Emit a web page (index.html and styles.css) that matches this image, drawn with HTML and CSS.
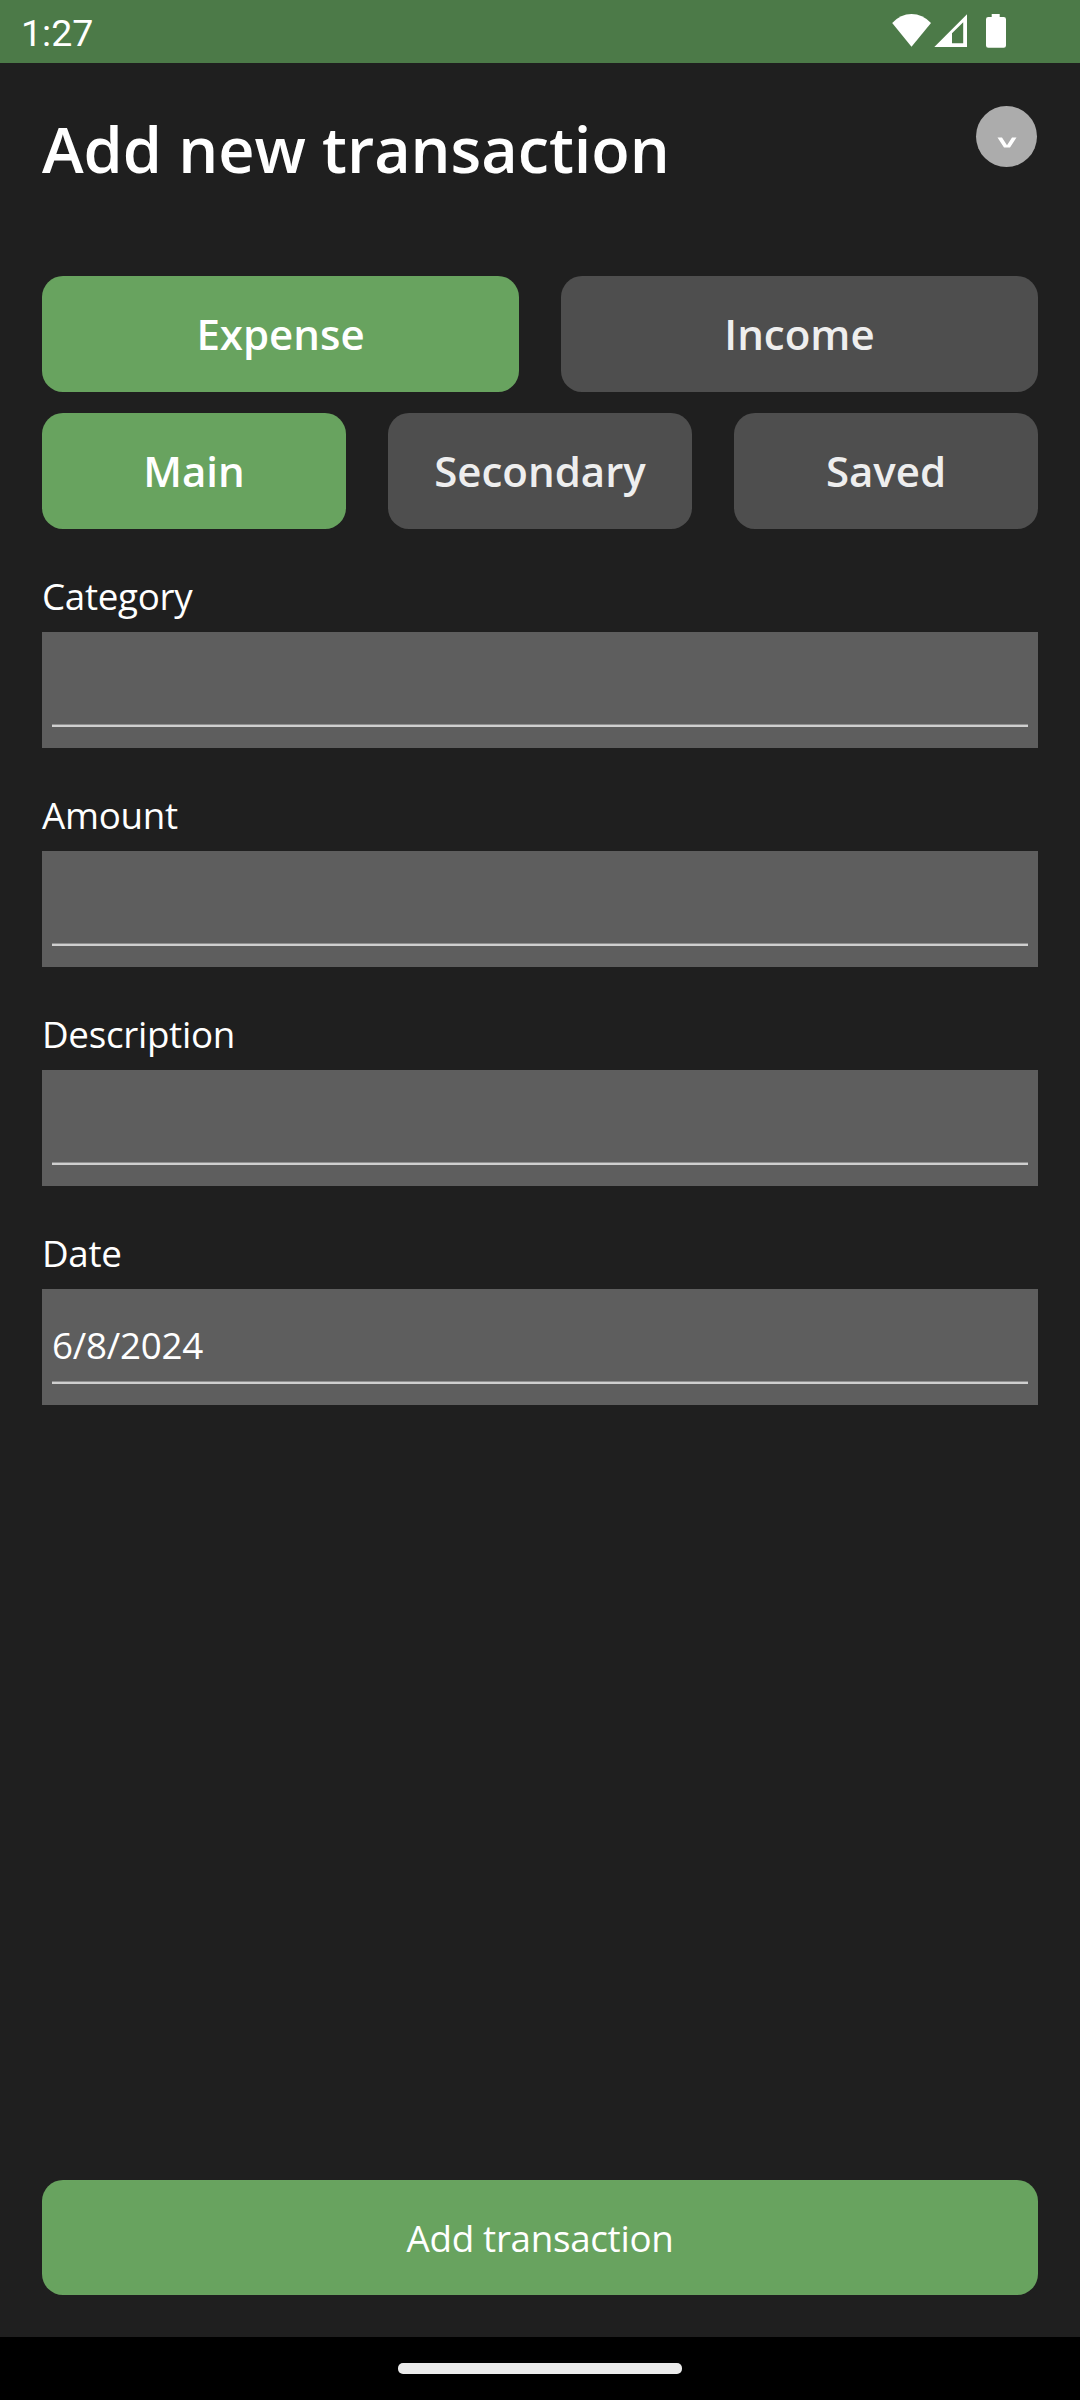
FILE: index.html
```html
<!DOCTYPE html>
<html lang="en">
<head>
<meta charset="utf-8">
<title>Add new transaction</title>
<link rel="stylesheet" href="styles.css">
</head>
<body>
<header class="status">
  <span class="clock">1:27</span>
  <svg class="status-icons" width="130" height="40" viewBox="0 0 130 40" fill="#fff">
    <path d="M0.2 11Q8.500 2 19.500 2T39 11L19.500 34.700Z"/>
    <path fill-rule="evenodd" d="M42.300 35L75 2.300V35ZM60 31.300H71.200V10.300L60 21.300Z"/>
    <path d="M99.700 2h8v3h4q2.300 0 2.300 2.300v26.200q0 2.300-2.300 2.300h-15.400q-2.300 0-2.300-2.300v-26.200q0-2.300 2.300-2.300h3.400z"/>
  </svg>
</header>
<main class="screen">
  <div class="head">
    <h1 class="title">Add new transaction</h1>
    <button class="close" aria-label="Close"><svg width="20" height="11" viewBox="0 0 20 11" fill="#fff"><path d="M0.500 0.500H5L10 8.200L15 0.500H19.500L13 10.500H7Z"/></svg></button>
  </div>
  <div class="tabs"><button class="tab on">Expense</button><button class="tab">Income</button></div>
  <div class="tabs"><button class="tab on">Main</button><button class="tab">Secondary</button><button class="tab">Saved</button></div>
  <form class="form">
    <div class="field"><label class="label">Category</label><div class="box"><div class="value"></div></div></div>
    <div class="field"><label class="label">Amount</label><div class="box"><div class="value"></div></div></div>
    <div class="field"><label class="label">Description</label><div class="box"><div class="value"></div></div></div>
    <div class="field"><label class="label">Date</label><div class="box"><div class="value">6/8/2024</div></div></div>
  </form>
  <button class="submit">Add transaction</button>
</main>
<footer class="nav"><div class="pill"></div></footer>
</body>
</html>
```
FILE: styles.css
```css
* { box-sizing: border-box; }
body { margin: 0; width: 1080px; height: 2400px; display: flex; flex-direction: column; background: #1f1f1f; color: #fff; font-family: "Open Sans", sans-serif; }
button { border: 0; padding: 0; color: inherit; font-family: inherit; }
.status { height: 63px; background: #4c7a48; display: flex; justify-content: space-between; padding: 0 58px 0 21px; }
.clock { font: 37.5px/67px Roboto, sans-serif; }
.status-icons { margin-top: 12px; }
.screen { flex: 1; display: flex; flex-direction: column; padding: 42px 42px; }
.head { display: flex; justify-content: space-between; height: 171px; }
.title { margin: 0; font-size: 63px; font-weight: 600; line-height: 88px; letter-spacing: -0.05px; white-space: nowrap; }
.close { width: 61px; height: 61px; margin: 1px 1px 0 0; border-radius: 50%; background: #acacac; display: flex; align-items: center; justify-content: center; padding-top: 11px; }
.tabs { display: flex; gap: 42px; margin-bottom: 21px; }
.tab { flex: 1 1 0; height: 116px; padding-bottom: 2px; border-radius: 21px; background: #4e4e4e; color: #eee; font-size: 42px; font-weight: 600; }
.tab.on { background: #68a35f; color: #fff; }
.form { margin-top: 17px; }
.field { height: 219px; }
.label { display: block; height: 65px; font-size: 36.75px; line-height: 58px; letter-spacing: -0.3px; }
.box { height: 116px; background: #5e5e5e; padding: 0 10px; }
.value { height: 95px; border-bottom: 2px solid #cfcfcf; box-shadow: inset 0 -1px #909090; font-size: 36.75px; line-height: 112px; letter-spacing: -0.25px; }
.submit { margin-top: auto; height: 115px; border-radius: 21px; background: #68a35f; font-size: 36.75px; letter-spacing: -0.3px; }
.nav { height: 63px; background: #000; display: flex; align-items: center; justify-content: center; }
.pill { width: 284px; height: 11px; border-radius: 5px; background: #ebebeb; }
```
